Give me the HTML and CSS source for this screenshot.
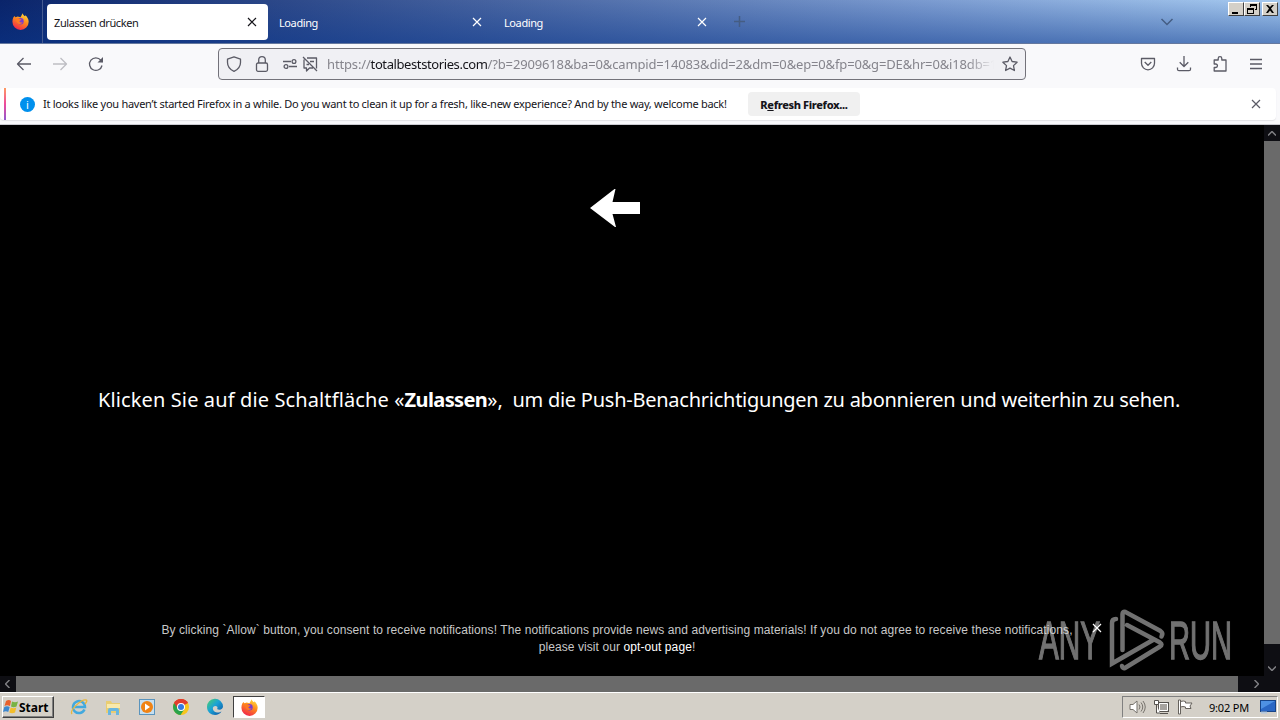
FILE: index.html
```
<!DOCTYPE html>
<html lang="de">
<head>
    <meta charset="UTF-8">
    <meta name="viewport" content="width=device-width, initial-scale=1.0">
    <title>Zulassen drücken</title>
    <link rel="stylesheet" href="styles.css">
</head>
<body>
    <svg class="defs" width="0" height="0">
        <defs>
            <linearGradient id="fire" x1="0.8" y1="0" x2="0.3" y2="1">
                <stop offset="0" stop-color="#ffe040"/>
                <stop offset="0.45" stop-color="#ff8a1c"/>
                <stop offset="1" stop-color="#f0224e"/>
            </linearGradient>
            <linearGradient id="edge" x1="0" y1="0" x2="1" y2="1">
                <stop offset="0" stop-color="#4fd264"/>
                <stop offset="0.45" stop-color="#1ba3d6"/>
                <stop offset="1" stop-color="#0b4fa0"/>
            </linearGradient>
            <symbol id="firefox" viewBox="0 0 16 16">
                <path d="M1.2 4.2 2.4 2.8 3.2 4 5.4 3.2 8 4 10 .3c.3 1.5 1.2 2 2.3 2.8l.3-.9c1.8 1.5 3.1 3.7 3.1 6.1A7.6 7.6 0 0 1 8 15.9 7.6 7.6 0 0 1 .4 8.3c0-1.5.3-2.9.8-4.1z" fill="url(#fire)"/>
                <circle cx="8" cy="7.8" r="3" fill="#7a3bd0"/>
                <path d="M3.5 5.5c1.5-1 3-.6 4 .2l1.500.4c-.5 1-1.7 1-2 1.600.2 1.2 1.6 1.7 3 1.100-.8 2-4.2 2.2-5.5-.2z" fill="#ff7a22"/>
            </symbol>
            <symbol id="close" viewBox="0 0 10 10">
                <path d="M1 1l8 8M9 1L1 9" fill="none" stroke="currentColor" stroke-width="1.2"/>
            </symbol>
        </defs>
    </svg>

    <header class="titlebar">
        <div class="brand"><svg width="17" height="17"><use href="#firefox"/></svg></div>
        <div class="tab active"><span>Zulassen drücken</span><svg width="10" height="10"><use href="#close"/></svg></div>
        <div class="tab"><span>Loading</span><svg width="10" height="10"><use href="#close"/></svg></div>
        <div class="tab"><span>Loading</span><svg width="10" height="10"><use href="#close"/></svg></div>
        <svg class="new-tab" width="11" height="11" viewBox="0 0 11 11"><path d="M5.500 0v11M0 5.500h11"/></svg>
        <svg class="all-tabs" width="14" height="8" viewBox="0 0 14 8"><path d="M1.500 1L7 6.500 12.500 1"/></svg>
        <div class="window-buttons">
            <button><svg width="14" height="12" viewBox="0 0 14 12"><path d="M3 9h6v2H3z"/></svg></button>
            <button><svg width="14" height="12" viewBox="0 0 14 12"><path d="M5 1h7v6h-2V6h1V3H6v1H5z"/><path d="M2 5h7v6H2zM3 7v3h5V7z" fill-rule="evenodd"/></svg></button>
            <button class="quit"><svg width="14" height="12" viewBox="0 0 14 12"><path d="M3 2h2l2 2 2-2h2L8 5.500 11 10H9L7 7.500 5 10H3l3-4.500z"/></svg></button>
        </div>
    </header>

    <nav class="toolbar">
        <svg class="icon back" width="16" height="16" viewBox="0 0 16 16"><path d="M15 8H1.500M7.500 2l-6 6 6 6"/></svg>
        <svg class="icon forward" width="16" height="16" viewBox="0 0 16 16"><path d="M1 8h13.500M8.500 2l6 6-6 6"/></svg>
        <svg class="icon reload" width="16" height="16" viewBox="0 0 16 16"><path d="M14 9.500A6.300 6.300 0 1 1 12.800 4.200L14.500 6"/><path d="M15 1v5.500H9.500z" class="solid"/></svg>
        <div class="urlbar">
            <svg class="icon shield" width="16" height="16" viewBox="0 0 16 16"><path d="M8 .8L14.500 3.200v3.300c0 4-2.500 7-6.500 8.800C4 13.500 1.500 10.500 1.500 6.500V3.200z"/></svg>
            <svg class="icon lock" width="16" height="16" viewBox="0 0 16 16"><rect x="2.500" y="7" width="11" height="8.300" rx="1.500"/><path d="M4.700 7V4a3.300 3.300 0 0 1 6.600 0v3"/></svg>
            <svg class="icon perms" width="16" height="16" viewBox="0 0 16 16"><path d="M1 5.500h8M7 10.500h8"/><circle cx="12" cy="5.500" r="1.900"/><circle cx="4" cy="10.500" r="1.900"/></svg>
            <svg class="icon blocked" width="16" height="16" viewBox="0 0 16 16"><path d="M5 2h9.500v10.500M2 3.500v8.500h2.500V15l3-3H11M1 1l14 14M8 5.500h4M4.500 8.500H7"/></svg>
            <div class="url">https://<b>totalbeststories.com</b>/?b=2909618&amp;ba=0&amp;campid=14083&amp;did=2&amp;dm=0&amp;ep=0&amp;fp=0&amp;g=DE&amp;hr=0&amp;i18db=18</div>
            <svg class="icon star" width="16" height="16" viewBox="0 0 16 16"><path d="M8 1l2.100 4.500 5 .7-3.600 3.400.9 4.900L8 12.100l-4.400 2.400.9-4.900L.9 6.200l5-.7z"/></svg>
        </div>
        <div class="tools">
            <svg class="icon" width="16" height="16" viewBox="0 0 16 16"><path d="M1.500 2.500h13v4.800a6.500 6.500 0 0 1-13 0zM4.700 6L8 9.200 11.300 6"/></svg>
            <svg class="icon" width="16" height="16" viewBox="0 0 16 16"><path d="M8 0v10.500M3.700 6.200L8 10.500l4.300-4.300M1.500 11.500v1.700q0 1.500 1.500 1.500h10q1.500 0 1.500-1.500v-1.700"/></svg>
            <svg class="icon" width="16" height="16" viewBox="0 0 16 16"><path d="M2.200 6V4h4V2.500a1.800 1.800 0 0 1 3.600 0V4H14v11H2.200v-3.500h1.500a1.700 1.700 0 0 0 0-3.500H2.200z"/></svg>
            <svg class="icon" width="16" height="16" viewBox="0 0 16 16"><path d="M2 3.500h12M2 8h12M2 12.500h12"/></svg>
        </div>
    </nav>

    <div class="notice-wrap">
        <div class="notice">
            <span class="info">i</span>
            <span class="notice-text">It looks like you haven’t started Firefox in a while. Do you want to clean it up for a fresh, like-new experience? And by the way, welcome back!</span>
            <button class="refresh">R<u>e</u>fresh Firefox...</button>
            <svg width="10" height="10"><use href="#close"/></svg>
        </div>
    </div>

    <div class="viewport">
        <main class="page">
            <svg class="arrow" width="50" height="40" viewBox="0 0 50 40"><path d="M0 20L24.500 1h1L22.500 14H50v12H22.500L26 39h-1z"/></svg>
            <h1>Klicken Sie auf die Schaltfläche «<strong>Zulassen</strong>», <span>um die Push-Benachrichtigungen zu abonnieren und weiterhin zu sehen.</span></h1>
            <p class="consent">By clicking `Allow` button, you consent to receive notifications! The notifications provide news and advertising materials! If you do not agree to receive these notifications,<br>please visit our <a>opt-out page</a>!</p>
            <svg class="dismiss" width="10" height="10"><use href="#close"/></svg>
        </main>
        <div class="scroll-y">
            <svg width="8" height="5" viewBox="0 0 8 5"><path d="M0 4.500l4-4 4 4"/></svg>
            <div class="thumb"></div>
            <svg width="8" height="5" viewBox="0 0 8 5"><path d="M0 .5l4 4 4-4"/></svg>
        </div>
        <div class="scroll-x">
            <svg width="5" height="8" viewBox="0 0 5 8"><path d="M4.500 0l-4 4 4 4"/></svg>
            <div class="thumb"></div>
            <svg width="5" height="8" viewBox="0 0 5 8"><path d="M.5 0l4 4-4 4"/></svg>
        </div>
        <div class="corner"></div>
        <svg class="watermark" width="200" height="64" viewBox="0 0 200 64">
            <text x="1" y="50" textLength="61" lengthAdjust="spacingAndGlyphs">ANY</text>
            <text x="131" y="50" textLength="63" lengthAdjust="spacingAndGlyphs">RUN</text>
            <path d="M84.500 41V5q0-3 3-2l35 19q3 2 1 5.500M78 10q-4 0-4 4v40.500L115 31M89 16l33 17.500q3 2 0 4L87 59q-2 1-3-2"/>
        </svg>
    </div>

    <footer class="taskbar">
        <button class="start">
            <svg width="16" height="16" viewBox="0 0 16 16"><path d="M3 2q3-2 5 0L7 7Q4 5.500 1.500 7z" fill="#e8602c"/><path d="M9 2.500q3 1.500 6 0L13.500 7.500q-3 1.500-5.500 0z" fill="#79b343"/><path d="M1.300 8Q4 6.500 6.700 8l-1.500 5Q3 11.500 0 13z" fill="#3c87cf"/><path d="M7.700 8.500q3 1.500 5.600 0L12 13.500q-3 1.500-5.700 0z" fill="#f3bd2b"/></svg>
            <span>Start</span>
        </button>
        <div class="launchers">
            <svg width="18" height="18" viewBox="0 0 18 18"><path d="M14.500 11.500A6 6 0 1 1 15 9H5" fill="none" stroke="#42a9de" stroke-width="2.500"/><path d="M2 16C-1 12 12 1 16 2q2 .5-1 4" fill="none" stroke="#e9b73c" stroke-width="1.300"/></svg>
            <svg width="18" height="18" viewBox="0 0 18 18"><path d="M2 3h5l1 2h8v10H2z" fill="#e9cd72"/><path d="M3 6h13v4H3z" fill="#f9e9ab"/><path d="M4 17v-5q0-2 2-2h7q2 0 2 2v5h-3v-4H7v4z" fill="#69b6df"/></svg>
            <svg width="18" height="18" viewBox="0 0 18 18"><rect x="1.500" y="1.500" width="15" height="15" fill="#c6dff0" stroke="#5a94bd"/><circle cx="9" cy="9" r="6" fill="#f08314"/><path d="M7 5.500l5 3.500-5 3.500z" fill="#fff"/></svg>
            <svg width="18" height="18" viewBox="0 0 18 18"><circle cx="9" cy="9" r="8" fill="#f8c51c"/><path d="M9 9L2.100 5A8 8 0 0 1 15.900 5z" fill="#e13c2e"/><path d="M9 9L2.100 5A8 8 0 0 0 8.500 17l4-6z" fill="#29a34b"/><path d="M9 5h6.900A8 8 0 0 0 2.100 5L6 11z" fill="#e13c2e"/><circle cx="9" cy="9" r="4" fill="#fff"/><circle cx="9" cy="9" r="3" fill="#357ae0"/></svg>
            <svg width="18" height="18" viewBox="0 0 18 18"><path d="M1 9a8 8 0 0 1 16-.5c0 3-3.500 4-6 2.500 1-1 .5-3-1.500-3-4 0-3.500 6 1.500 6.500 2 .2 3.500-.5 4.500-1C12 19.500 1 17.500 1 9z" fill="url(#edge)"/></svg>
            <div class="running"><svg width="17" height="17"><use href="#firefox"/></svg></div>
        </div>
        <div class="tray">
            <svg width="17" height="16" viewBox="0 0 17 16"><path d="M1 5.500h3L8 2v12l-4-3.500H1z" fill="#fff" stroke="#77736d"/><path d="M10 5.500q2 2.500 0 5M12 3.500q3.500 4.500 0 9M14 2q4.500 6 0 12" fill="none" stroke="#77736d"/></svg>
            <svg width="17" height="16" viewBox="0 0 17 16"><rect x="5.500" y="3.500" width="10" height="9" fill="#a6a39f" stroke="#55524e"/><path d="M6.500 4.500h8v7h-8z" fill="none" stroke="#fff"/><path d="M7 14.500h8" stroke="#55524e"/><path d="M1.500 1.500h4v4h-4zM3.500 6v8H7" fill="#fff" stroke="#55524e"/></svg>
            <svg width="17" height="16" viewBox="0 0 17 16"><path d="M1.500 1v14h2V1zM3.500 2.500q3-1 5 0v1.500h6.500l-2 3 1 2.500H8.500V8q-2.500-1-5 0z" fill="#fff" stroke="#66625d"/></svg>
            <time>9:02 PM</time>
            <svg class="desktop" width="16" height="14" viewBox="0 0 16 14"><rect x=".5" y=".5" width="15" height="11" fill="#2a67c4" stroke="#164488"/><path d="M1 1h14L1 9z" fill="#4e91e3"/><path d="M1 12.500h6" stroke="#b2c7de" stroke-width="2"/></svg>
        </div>
    </footer>
</body>
</html>
```
FILE: styles.css
```
* {
    box-sizing: border-box;
}

body {
    margin: 0;
    width: 1280px;
    height: 720px;
    display: flex;
    flex-direction: column;
    overflow: hidden;
    background: #000;
    color: #15141a;
    font-family: "Noto Sans", "Open Sans", sans-serif;
    font-size: 11px;
}

.defs {
    position: absolute;
}

svg {
    display: block;
    flex: none;
}

button {
    padding: 0;
    border: none;
    font-family: inherit;
}

/* Title bar and tabs */
.titlebar {
    height: 44px;
    flex: none;
    display: flex;
    align-items: center;
    position: relative;
    background: linear-gradient(to bottom, transparent, rgba(10, 55, 140, 0.5)), linear-gradient(to right, #0a246a, #7b9bd0 72%, #a6caf0);
    border-bottom: 1px solid #65789e;
}

.brand {
    width: 43px;
    height: 43px;
    padding: 13px 0 0 12px;
    border-right: 1px solid #455b91;
}

.tab {
    width: 221px;
    height: 36px;
    margin-left: 4px;
    padding: 0 11px 0 7px;
    display: flex;
    align-items: center;
    justify-content: space-between;
    border-radius: 4px;
    color: #fff;
}

.tab.active {
    background: #fff;
    color: #15141a;
}

.tab span {
    padding-top: 2px;
    letter-spacing: -0.4px;
}

.new-tab {
    margin-left: 16px;
}

.new-tab path,
.all-tabs path {
    fill: none;
    stroke: #455d83;
    stroke-width: 1.5;
}

.all-tabs {
    margin-left: auto;
    margin-right: 106px;
}

.window-buttons {
    position: absolute;
    top: 2px;
    right: 2px;
    display: flex;
}

.window-buttons button {
    width: 16px;
    height: 14px;
    background: #d4d0c8;
    border: 1px solid;
    border-color: #fff #404040 #404040 #fff;
}

.window-buttons .quit {
    margin-left: 2px;
}

/* Navigation toolbar */
.toolbar {
    height: 44px;
    flex: none;
    display: flex;
    align-items: center;
    padding: 0 16px 4px;
    background: #f9f9fb;
}

.icon {
    fill: none;
    stroke: #5b5b66;
    stroke-width: 1.3;
    stroke-linejoin: round;
}

.icon .solid {
    fill: #5b5b66;
    stroke: none;
}

.forward {
    margin-left: 20px;
    stroke: #bebec3;
}

.reload {
    margin-left: 20px;
}

.urlbar {
    width: 808px;
    height: 32px;
    margin-left: 114px;
    padding: 0 7px;
    display: flex;
    align-items: center;
    background: #f0f0f4;
    border: 1px solid #73727a;
    border-radius: 4px;
}

.lock {
    margin-left: 12px;
}

.perms {
    margin-left: 12px;
}

.blocked {
    margin-left: 4px;
}

.url {
    width: 667px;
    margin: 0 8px 0 9px;
    overflow: hidden;
    white-space: nowrap;
    color: #85848c;
    font-size: 13px;
    letter-spacing: -0.15px;
    -webkit-mask-image: linear-gradient(to right, #000 640px, transparent);
    mask-image: linear-gradient(to right, #000 640px, transparent);
}

.url b {
    color: #15141a;
    font-weight: normal;
    letter-spacing: -0.4px;
}

.tools {
    margin-left: auto;
    display: flex;
    gap: 20px;
}

/* Refresh notification */
.notice-wrap {
    height: 37px;
    flex: none;
    padding-right: 4px;
    background: #f9f9fb;
    border-bottom: 1px solid #ccccd2;
}

.notice {
    height: 32px;
    padding: 0 15px;
    display: flex;
    align-items: center;
    position: relative;
    background: #fff;
    border-radius: 4px;
    box-shadow: 0 1px 1px #e2e2e6;
    color: #15141a;
}

.notice::before {
    content: "";
    position: absolute;
    left: 4px;
    top: 0;
    width: 2px;
    height: 32px;
    background: linear-gradient(#ff9a62, #ee4a9b 50%, #9059ce);
}

.notice > svg {
    margin-left: auto;
    color: #5b5b66;
}

.info {
    width: 15px;
    height: 15px;
    margin-left: 5px;
    border-radius: 50%;
    background: #0090ed;
    color: #fff;
    line-height: 15px;
    text-align: center;
}

.notice-text {
    width: 713px;
    flex: none;
    padding: 0 0 2px 8px;
    letter-spacing: -0.27px;
    white-space: nowrap;
}

.refresh {
    width: 112px;
    height: 24px;
    border-radius: 4px;
    background: #f0f0f0;
    color: #15141a;
    font-size: 11px;
    font-weight: 800;
    letter-spacing: -0.35px;
}

/* Web page with its scrollbars */
.viewport {
    height: 567px;
    flex: none;
    display: grid;
    grid-template-columns: 1264px 16px;
    grid-template-rows: 551px 16px;
    position: relative;
}

.page {
    display: flex;
    flex-direction: column;
    align-items: center;
    position: relative;
    background: #000;
    color: #fff;
}

.arrow {
    margin: 63px 34px 0 0;
    fill: #fff;
}

h1 {
    margin: 157px 0 0 14px;
    font-size: 20px;
    font-weight: normal;
    letter-spacing: 0.12px;
    line-height: 30px;
    white-space: nowrap;
}

h1 strong {
    letter-spacing: -0.6px;
}

h1 span {
    padding-left: 4px;
    letter-spacing: -0.25px;
}

.consent {
    margin: 207px 0 0;
    padding-right: 30px;
    color: #c8c8c8;
    font-family: "Liberation Sans", Arial, sans-serif;
    font-size: 12px;
    letter-spacing: 0.085px;
    line-height: 17px;
    text-align: center;
    white-space: nowrap;
}

.consent a {
    color: #fff;
}

.dismiss {
    position: absolute;
    left: 1092px;
    top: 498px;
    z-index: 2;
}

.scroll-y,
.scroll-x {
    display: flex;
    align-items: center;
    justify-content: space-between;
    background: #0e0e13;
}

.scroll-y {
    flex-direction: column;
    padding: 6px 0 5px;
}

.scroll-x {
    padding: 0 5px;
}

.scroll-y path,
.scroll-x path {
    fill: none;
    stroke: #808084;
    stroke-width: 1.5;
}

.thumb {
    background: #6a6a6a;
}

.scroll-y .thumb {
    width: 16px;
    height: 503px;
    margin: 5px 0 auto;
}

.scroll-x .thumb {
    width: 1222px;
    height: 16px;
    margin: 0 auto 0 6px;
}

.corner {
    background: #0e0e13;
}

.watermark {
    position: absolute;
    left: 1038px;
    top: 484px;
    opacity: 0.5;
}

.watermark text {
    fill: #e2e2e2;
    stroke: #e2e2e2;
    stroke-width: 1.4;
    font-family: "Liberation Sans", sans-serif;
    font-size: 53px;
}

.watermark path {
    fill: none;
    stroke: #e2e2e2;
    stroke-width: 4.5;
    stroke-linecap: round;
}

/* Taskbar */
.taskbar {
    height: 28px;
    flex: none;
    padding: 1px 2px 0;
    display: flex;
    align-items: center;
    background: #d4d0c8;
    border-top: 1px solid #fff;
}

.start {
    width: 52px;
    height: 22px;
    display: flex;
    align-items: center;
    background: #d4d0c8;
    border: 1px solid;
    border-color: #fff #404040 #404040 #fff;
    box-shadow: inset -1px -1px #808080;
    font-size: 12px;
    font-weight: bold;
    color: #000;
}

.launchers {
    margin-left: 16px;
    display: flex;
    align-items: center;
    gap: 16px;
}

.running {
    width: 32px;
    height: 22px;
    margin-left: -7px;
    display: flex;
    align-items: center;
    justify-content: center;
    background: #fff;
    border: 1px solid;
    border-color: #404040 #fff #fff #404040;
}

.tray {
    width: 156px;
    height: 22px;
    margin-left: auto;
    padding: 0 1px 0 6px;
    display: flex;
    align-items: center;
    gap: 7px;
    border: 1px solid;
    border-color: #808080 #fff #fff #808080;
    color: #000;
}

.tray time {
    width: 42px;
    margin-left: 8px;
    letter-spacing: -0.2px;
    white-space: nowrap;
}

.desktop {
    margin-left: auto;
}
```
